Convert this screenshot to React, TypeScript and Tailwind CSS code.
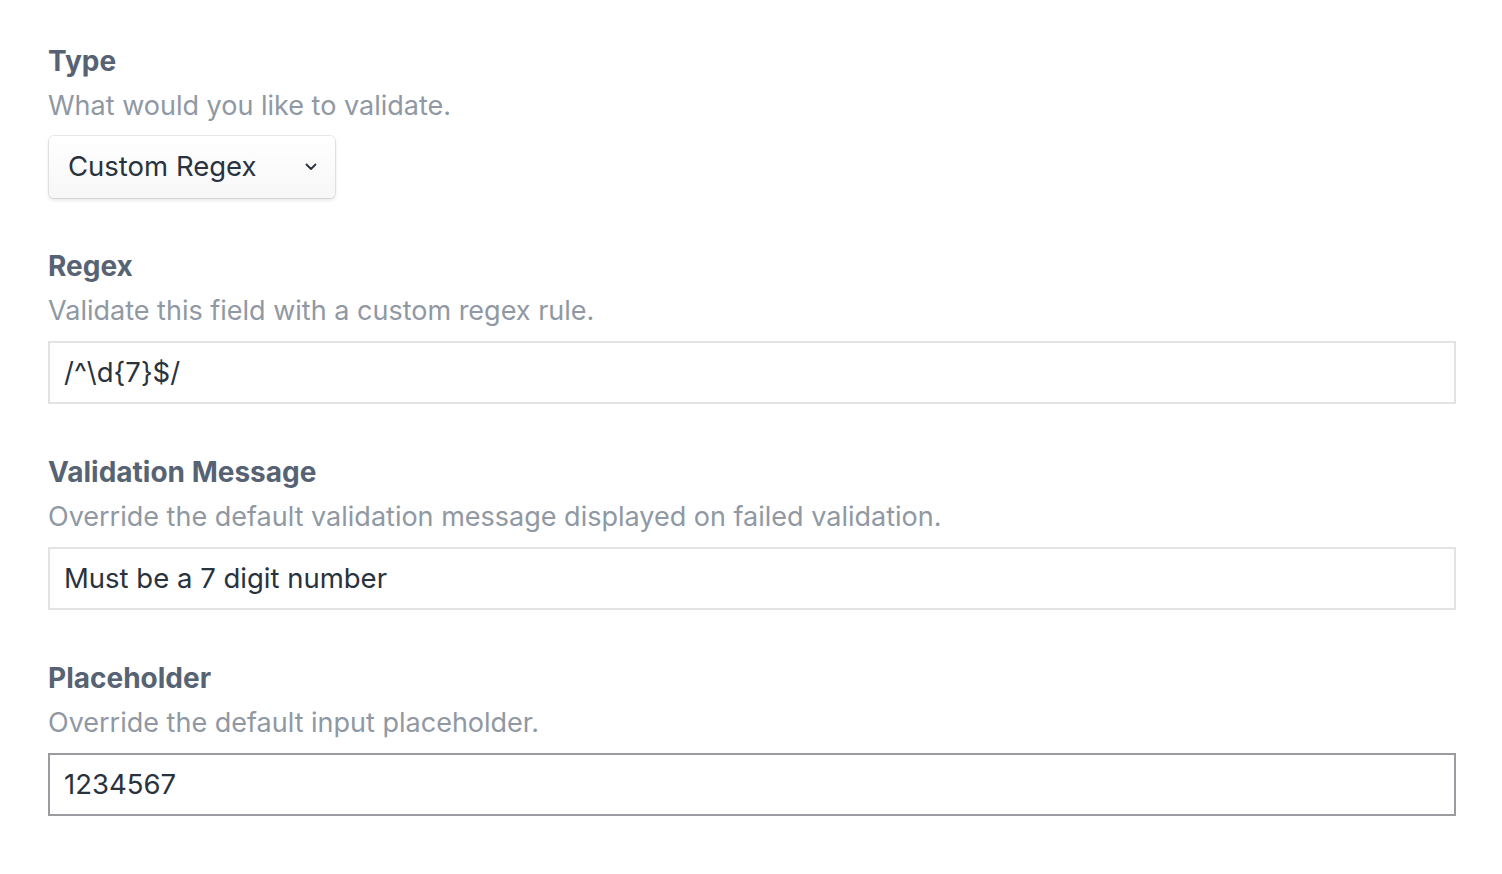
import React from "react";

const font = { fontFamily: "Inter, 'Noto Sans', sans-serif" };

function Field({
  label,
  hint,
  children,
}: {
  label: string;
  hint: string;
  children: React.ReactNode;
}) {
  return (
    <div className="flex flex-col">
      <div className="h-[40px] text-[28px] font-bold leading-[40px] text-[#576373]">{label}</div>
      <div className="mt-[5px] h-[40px] text-[27px] leading-[40px] text-[#8f98a3]">{hint}</div>
      <div className="mt-[10px]">{children}</div>
    </div>
  );
}

function TextInput({ value, focused }: { value: string; focused?: boolean }) {
  return (
    <div
      className={
        "flex h-[63px] items-center border-2 px-[14px] text-[27.5px] text-[#29323d] " +
        (focused ? "border-[#9a9aa1]" : "border-[#e3e3e3]")
      }
    >
      {value}
    </div>
  );
}

export default function App() {
  return (
    <div className="min-h-screen bg-white pl-[48px] pr-[46px] pt-[41px]" style={font}>
      <div className="flex flex-col gap-[48px]">
        <Field label="Type" hint="What would you like to validate.">
          <div className="ml-px flex h-[62px] w-[286px] items-center justify-between rounded-[5px] bg-gradient-to-b from-white to-[#f7f7f7] pl-[19px] pr-[18px] text-[27.5px] text-[#29323d] shadow-[0_0_0_1px_rgba(0,0,0,0.08),0_2px_4px_rgba(0,0,0,0.12)]">
            <span>Custom Regex</span>
            <svg width="12" height="8" viewBox="0 0 12 8" fill="none">
              <path d="M1.5 1.5 6 6l4.5-4.5" stroke="#29323d" strokeWidth="1.8" strokeLinecap="round" strokeLinejoin="round" />
            </svg>
          </div>
        </Field>
        <Field label="Regex" hint="Validate this field with a custom regex rule.">
          <TextInput value="/^\d{7}$/" />
        </Field>
        <Field label="Validation Message" hint="Override the default validation message displayed on failed validation.">
          <TextInput value="Must be a 7 digit number" />
        </Field>
        <Field label="Placeholder" hint="Override the default input placeholder.">
          <TextInput value="1234567" focused />
        </Field>
      </div>
    </div>
  );
}
